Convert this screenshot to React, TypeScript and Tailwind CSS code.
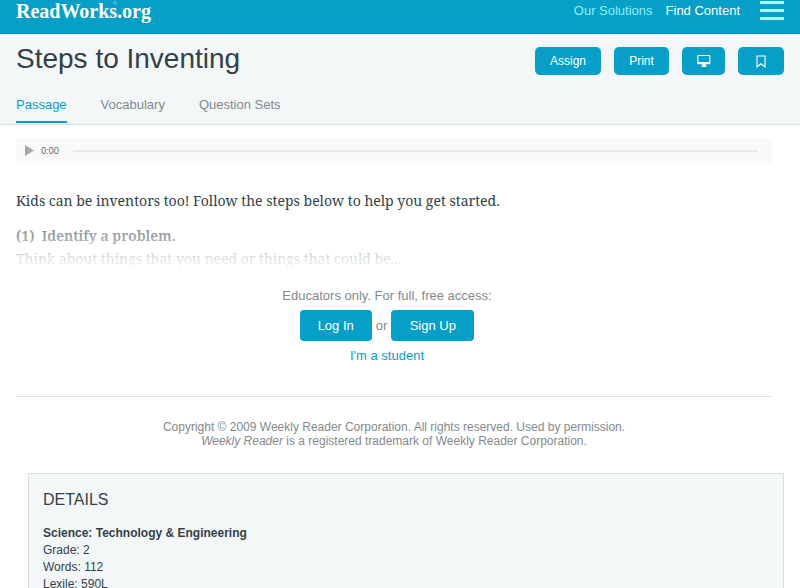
import { useState } from "react";

const tabs = ["Passage", "Vocabulary", "Question Sets"];

const details = [
  { label: "Grade", value: "2" },
  { label: "Words", value: "112" },
  { label: "Lexile", value: "590L" },
];

const actionClass =
  "flex h-7 items-center justify-center rounded-[5px] bg-[#069fc7] text-xs text-white hover:bg-[#058db1]";

function ScreenIcon() {
  return (
    <svg width="14" height="12" viewBox="0 0 14 12" aria-hidden="true">
      <path
        fill="currentColor"
        fillRule="evenodd"
        d="M1.2 0h11.3a.9.9 0 0 1 .9.9v7.4a.9.9 0 0 1-.9.9H8.7v1.3h.8V12h-5v-1.5h.8V9.2H1.2a.9.9 0 0 1-.9-.9V.9a.9.9 0 0 1 .9-.9Zm.2 1v6h10.9V1Z"
      />
    </svg>
  );
}

function BookmarkIcon() {
  return (
    <svg width="10" height="13" viewBox="0 0 10 13" fill="none" aria-hidden="true">
      <path d="M1 1h8v11L5 8.8 1 12Z" stroke="currentColor" strokeWidth="1.1" />
    </svg>
  );
}

function Header() {
  return (
    <header className="flex h-[34px] items-center justify-between border-b border-[#058cb2] bg-[#069fc7] px-4 pb-3">
      <a
        href="#"
        className="relative font-['Liberation_Serif',serif] text-xl leading-5 font-bold text-white"
      >
        ReadWorks.org
        <svg className="absolute top-0 left-[97px]" width="4" height="4" viewBox="0 0 4 4" aria-hidden="true">
          <circle cx="2" cy="2" r="1.5" fill="none" stroke="#9bd9ea" strokeWidth="0.6" />
        </svg>
      </a>
      <nav className="flex items-center text-[13px] leading-5">
        <a href="#" className="text-[#8cf0fb]">
          Our Solutions
        </a>
        <a href="#" className="ml-[13px] text-white">
          Find Content
        </a>
        <button type="button" aria-label="Menu" className="ml-5 flex flex-col gap-[5px]">
          <span className="h-[3px] w-6 bg-[#a9f6fb]" />
          <span className="h-[3px] w-6 bg-[#a9f6fb]" />
          <span className="h-[3px] w-6 bg-[#a9f6fb]" />
        </button>
      </nav>
    </header>
  );
}

function AudioBar() {
  return (
    <div className="mt-[13px] flex h-[25px] items-center bg-[#f9f9f9] pr-[14px] pl-[9px]">
      <button type="button" aria-label="Play" className="text-[#aaaaaa]">
        <svg width="9" height="11" viewBox="0 0 9 11" aria-hidden="true">
          <path fill="currentColor" d="M0 0l9 5.5L0 11Z" />
        </svg>
      </button>
      <span className="ml-[7px] font-['Open_Sans',sans-serif] text-[9px] text-[#555555]">0:00</span>
      <div className="ml-[14px] h-[2px] flex-1 bg-[#e9e9e9]" />
    </div>
  );
}

export default function App() {
  const [active, setActive] = useState("Passage");

  return (
    <div className="bg-white font-['Liberation_Sans',Arial,sans-serif] text-[#333f48]">
      <Header />

      <section className="border-b border-[#dadfe0] bg-[#f3f7f8] px-4 pt-[13px] pb-px">
        <div className="flex h-7 items-center justify-between">
          <h1 className="pb-1 text-[28px] leading-7">Steps to Inventing</h1>
          <div className="flex gap-[13px]">
            <button type="button" className={`${actionClass} w-[66px]`}>
              Assign
            </button>
            <button type="button" className={`${actionClass} w-[55px]`}>
              Print
            </button>
            <button type="button" aria-label="Present" className={`${actionClass} w-[43px]`}>
              <ScreenIcon />
            </button>
            <button type="button" aria-label="Bookmark" className={`${actionClass} w-[46px]`}>
              <BookmarkIcon />
            </button>
          </div>
        </div>

        <div role="tablist" className="mt-5 flex gap-[34px]">
          {tabs.map((tab) => (
            <button
              key={tab}
              type="button"
              role="tab"
              aria-selected={active === tab}
              onClick={() => setActive(tab)}
              className={`border-b-2 pb-[6px] text-[13px] leading-5 ${active === tab
                ? "border-[#069fc7] text-[#069fc7]"
                : "border-transparent text-[#84898c]"
                }`}
            >
              {tab}
            </button>
          ))}
        </div>
      </section>

      <main className="pb-8">
        <div className="mr-7 ml-4">
          <AudioBar />

          <article className="relative mt-[26px] font-['Noto_Serif','Liberation_Serif',serif] text-sm leading-[23px]">
            <p>Kids can be inventors too! Follow the steps below to help you get started.</p>
            <p className="mt-3">
              <b className="font-semibold">(1)&nbsp; Identify a problem.</b>
              <br />
              Think about things that you need or things that could be...
            </p>
            <div className="absolute inset-x-0 bottom-0 h-12 bg-linear-to-b from-white/30 to-white" />
          </article>

          <div className="mt-4 pr-[14px] text-center text-[13px] leading-5 text-[#84898c]">
            <p>Educators only. For full, free access:</p>
            <div className="mt-1 flex items-center justify-center gap-1">
              <a href="#" className="flex h-[31px] w-[72px] items-center justify-center rounded-[4px] bg-[#069fc7] text-white">
                Log In
              </a>
              or
              <a href="#" className="flex h-[31px] w-[83px] items-center justify-center rounded-[4px] bg-[#069fc7] text-white">
                Sign Up
              </a>
            </div>
            <a href="#" className="mt-[5px] inline-block text-[#069fc7]">
              I'm a student
            </a>
          </div>

          <hr className="mt-[30px] border-[#dfe1e2]" />

          <p className="mt-[23px] text-center text-xs leading-[14px] text-[#84898c]">
            Copyright © 2009 Weekly Reader Corporation. All rights reserved. Used by permission.
            <br />
            <i>Weekly Reader</i> is a registered trademark of Weekly Reader Corporation.
          </p>
        </div>

        <section className="mt-[25px] mr-4 ml-7 border border-[#dadfe0] bg-[#f3f7f8] p-[14px]">
          <h2 className="text-base leading-6">DETAILS</h2>
          <div className="mt-[13px] text-xs leading-[17px]">
            <h3 className="font-bold">Science: Technology &amp; Engineering</h3>
            {details.map((item) => (
              <p key={item.label}>
                {item.label}: {item.value}
              </p>
            ))}
          </div>
        </section>
      </main>
    </div>
  );
}
